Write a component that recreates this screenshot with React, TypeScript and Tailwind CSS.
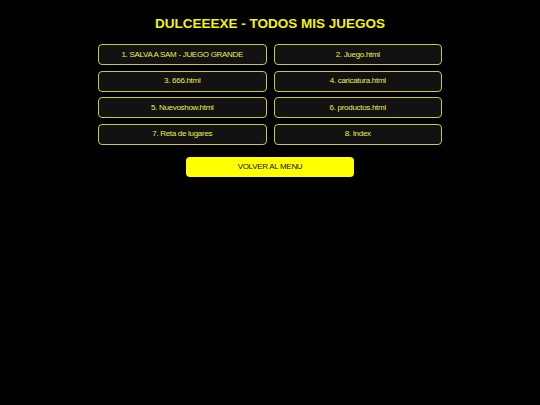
const juegos = [
  "1. SALVA A SAM - JUEGO GRANDE",
  "2. Juego.html",
  "3. 666.html",
  "4. caricatura.html",
  "5. Nuevoshow.html",
  "6. productos.html",
  "7. Reta de lugares",
  "8. Index",
];

export default function App() {
  return (
    <div
      className="min-h-screen w-full bg-black flex flex-col items-center"
      style={{ fontFamily: '"Liberation Sans", Arial, sans-serif' }}
    >
      {/* Titulo */}
      <h1 className="mt-[16px] text-[13.5px] leading-[16px] font-bold text-[#f5f500]">
        DULCEEEXE - TODOS MIS JUEGOS
      </h1>

      {/* Lista de juegos */}
      <div className="mt-[12px] w-[344px] grid grid-cols-2 gap-x-[7px] gap-y-[5.5px]">
        {juegos.map((j) => (
          <button
            key={j}
            className="h-[21px] rounded-[4px] border border-[#c8c83a] bg-[#121212] text-[8px] tracking-[-0.3px] text-[#ecec50] flex items-center justify-center"
          >
            {j}
          </button>
        ))}
      </div>

      {/* Volver */}
      <button className="mt-[12px] w-[168px] h-[20px] rounded-[4px] bg-[#ffff00] text-[8px] tracking-[-0.3px] text-[#111] flex items-center justify-center">
        VOLVER AL MENU
      </button>
    </div>
  );
}
